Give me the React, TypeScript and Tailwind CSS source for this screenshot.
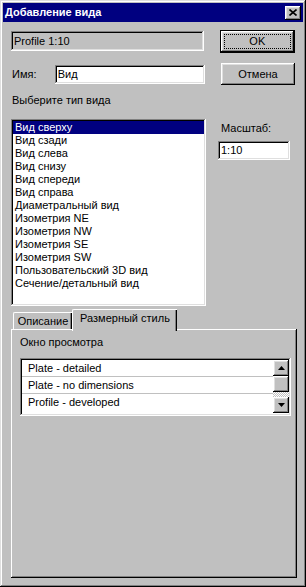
const raised =
  "shadow-[inset_-1px_-1px_#000,inset_1px_1px_#fff,inset_-2px_-2px_#808080,inset_2px_2px_#dfdfdf]";
const sunken =
  "shadow-[inset_-1px_-1px_#fff,inset_1px_1px_#808080,inset_-2px_-2px_#dfdfdf,inset_2px_2px_#000]";

const viewTypes = [
  "Вид сверху",
  "Вид сзади",
  "Вид слева",
  "Вид снизу",
  "Вид спереди",
  "Вид справа",
  "Диаметральный вид",
  "Изометрия NE",
  "Изометрия NW",
  "Изометрия SE",
  "Изометрия SW",
  "Пользовательский 3D вид",
  "Сечение/детальный вид",
];

const previews = ["Plate - detailed", "Plate - no dimensions", "Profile - developed"];

function Arrow({ down }: { down?: boolean }) {
  return (
    <svg width="7" height="4" viewBox="0 0 7 4">
      <path d={down ? "M0 0h7L3.5 4z" : "M3.5 0L7 4H0z"} fill="#000" />
    </svg>
  );
}

export default function App() {
  return (
    <div
      className={`flex h-[587px] w-[306px] flex-col bg-[#c0c0c0] p-[3px] font-['Liberation_Sans',Arial,sans-serif] text-[11px] leading-[13px] text-black shadow-[inset_-1px_-1px_#000,inset_1px_1px_#dfdfdf,inset_-2px_-2px_#808080,inset_2px_2px_#fff]`}
    >
      {/* Title bar */}
      <div className="flex h-[19px] items-center justify-between bg-[#000080] pl-[2px] pr-[2px]">
        <span className="font-bold text-white">Добавление вида</span>
        <button
          className={`flex h-[14px] w-[16px] items-center justify-center bg-[#c0c0c0] ${raised}`}
        >
          <svg width="8" height="7" viewBox="0 0 8 7">
            <path d="M0.5 0.5l7 6M7.5 0.5l-7 6" stroke="#000" strokeWidth="1.6" />
          </svg>
        </button>
      </div>

      <div className="flex flex-col px-[8px]">
        {/* Row 1 */}
        <div className="mt-[8px] flex items-start">
          <div className={`mt-[1px] flex h-[20px] w-[194px] items-center pl-[3px] ${sunken}`}>
            Profile 1:10
          </div>
          <button className="ml-[16px] h-[23px] w-[76px] border border-black bg-[#c0c0c0] p-0">
            <div
              className={`flex h-full w-full items-center justify-center p-[3px] ${raised}`}
            >
              <span className="flex h-full w-full items-center justify-center border border-dotted border-black">
                OK
              </span>
            </div>
          </button>
        </div>

        {/* Row 2 */}
        <div className="mt-[10px] flex items-start">
          <div className="mt-[2px] flex h-[19px] w-[194px] items-center">
            <span className="w-[44px] pl-[1px]">Имя:</span>
            <div className={`flex h-[19px] w-[151px] items-center bg-white pl-[3px] ${sunken}`}>
              Вид
            </div>
          </div>
          <button
            className={`ml-[16px] flex h-[22px] w-[76px] items-center justify-center bg-[#c0c0c0] ${raised}`}
          >
            Отмена
          </button>
        </div>

        <div className="mt-[9px] pl-[1px]">Выберите тип вида</div>

        {/* Row 3 */}
        <div className="mt-[12px] flex items-start">
          <div className={`h-[187px] w-[195px] bg-white p-[2px] ${sunken}`}>
            {viewTypes.map((v, i) => (
              <div
                key={v}
                className={`h-[13px] whitespace-nowrap pl-[2px] ${
                  i === 0 ? "bg-[#000080] text-white" : ""
                }`}
              >
                {v}
              </div>
            ))}
          </div>
          <div className="ml-[12px] flex flex-col">
            <span className="mt-[3px] pl-[3px]">Масштаб:</span>
            <div className={`mt-[6px] flex h-[19px] w-[72px] items-center bg-white pl-[3px] ${sunken}`}>
              1:10
            </div>
          </div>
        </div>

        {/* Tabs */}
        <div className="mt-[3px] flex h-[20px] items-end pl-[2px]">
          <div className="flex h-[17px] w-[59px] items-center justify-center border-l border-t border-white shadow-[inset_-1px_0_#000,inset_-2px_0_#808080] rounded-tl-[2px]">
            Описание
          </div>
          <div className="relative z-10 -mb-[2px] flex h-[22px] w-[105px] items-start justify-center border-l border-t border-white bg-[#c0c0c0] pt-[2px] shadow-[inset_-1px_0_#000,inset_-2px_0_#808080] rounded-tl-[2px]">
            Размерный стиль
          </div>
        </div>

        {/* Tab panel */}
        <div className="flex h-[249px] w-[286px] flex-col shadow-[inset_-1px_-1px_#000,inset_1px_1px_#fff,inset_-2px_-2px_#808080]">
          <div className="mt-[7px] pl-[9px]">Окно просмотра</div>
          <div className={`ml-[9px] mt-[9px] flex h-[58px] w-[271px] bg-white p-[2px] ${sunken}`}>
            <div className="flex flex-1 flex-col">
              {previews.map((p, i) => (
                <div
                  key={p}
                  className={`flex h-[17px] items-center pl-[6px] ${
                    i < 2 ? "border-b border-[#c0c0c0]" : ""
                  }`}
                >
                  {p}
                </div>
              ))}
            </div>
            <div className="flex w-[16px] flex-col">
              <div className={`flex h-[16px] items-center justify-center bg-[#c0c0c0] ${raised}`}>
                <Arrow />
              </div>
              <div className={`h-[16px] bg-[#c0c0c0] ${raised}`} />
              <div className="h-[5px] bg-[repeating-conic-gradient(#fff_0%_25%,#c0c0c0_0%_50%)] bg-[length:2px_2px]" />
              <div className={`flex h-[16px] items-center justify-center bg-[#c0c0c0] ${raised}`}>
                <Arrow down />
              </div>
            </div>
          </div>
        </div>
      </div>
    </div>
  );
}
